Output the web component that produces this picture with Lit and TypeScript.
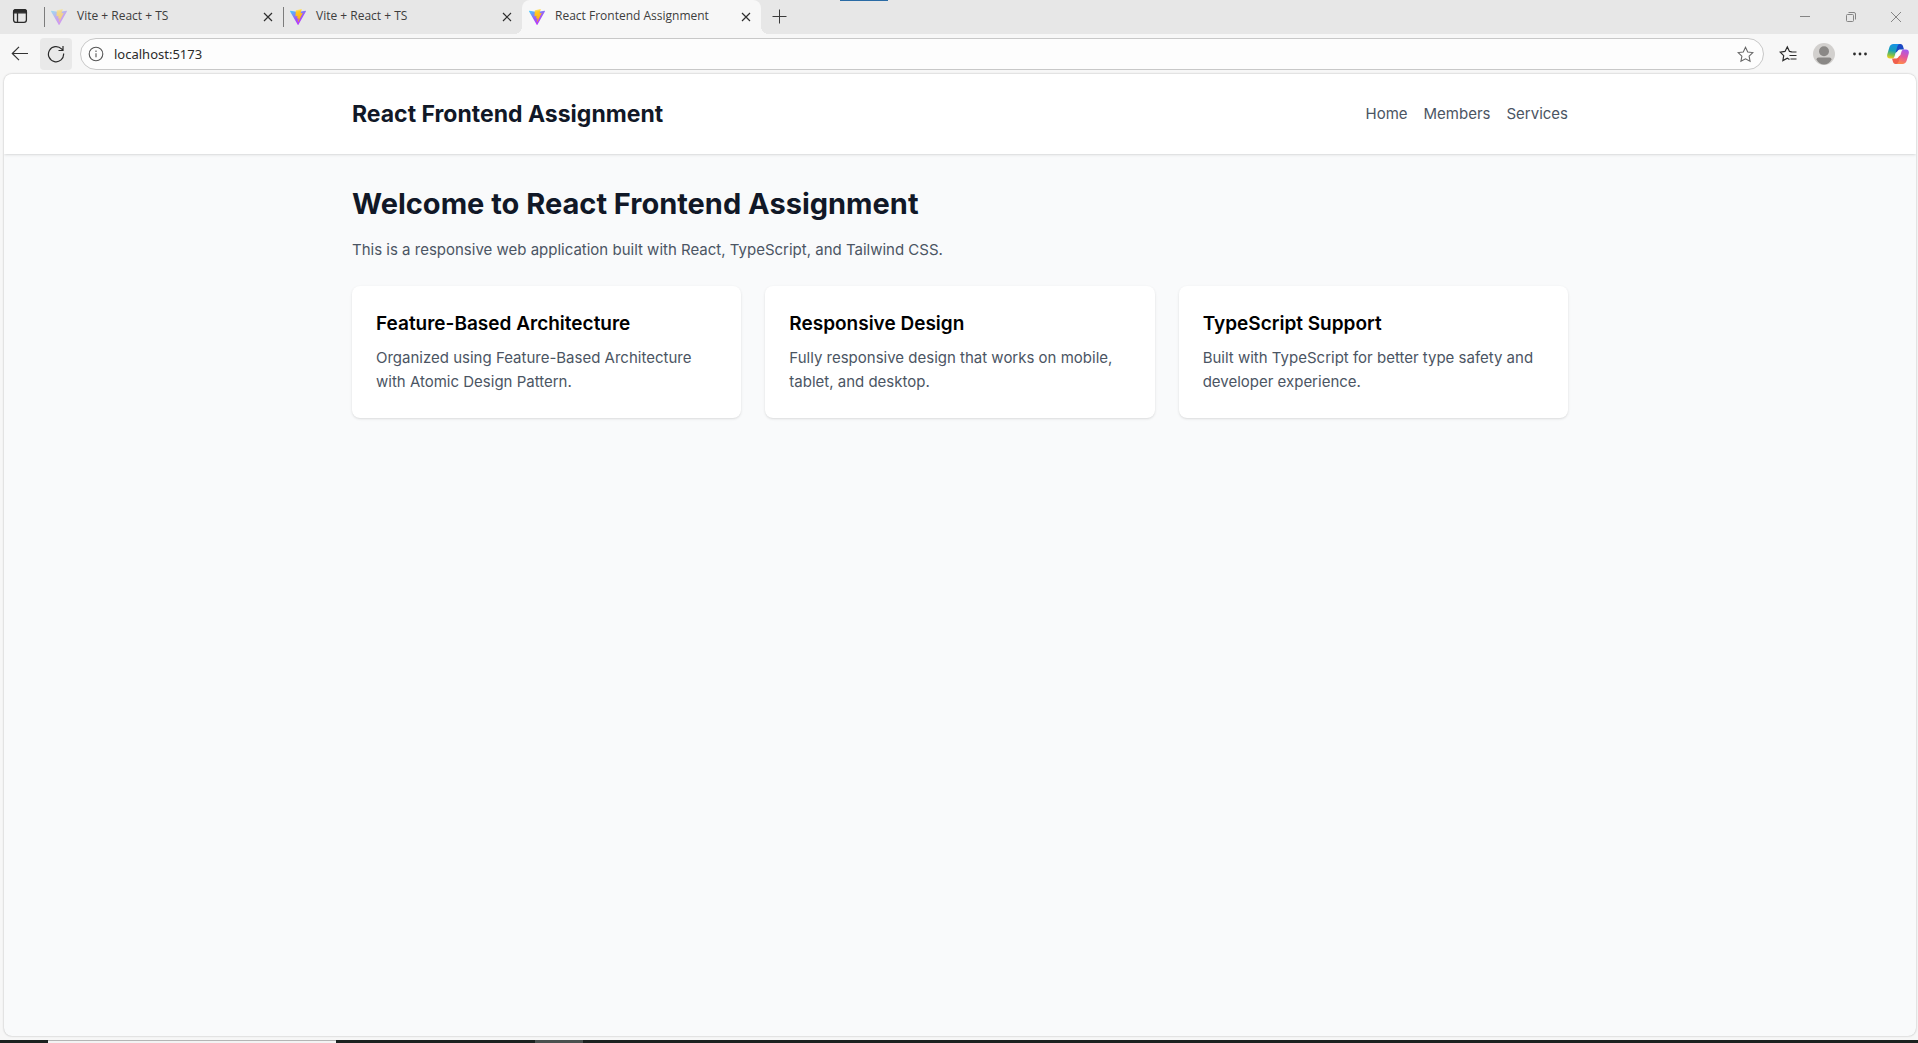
import { LitElement, html, css, svg } from "lit";
import { customElement, property } from "lit/decorators.js";

interface Tab {
  title: string;
  active: boolean;
  faded: boolean;
}

const TABS: Tab[] = [
  { title: "Vite + React + TS", active: false, faded: true },
  { title: "Vite + React + TS", active: false, faded: false },
  { title: "React Frontend Assignment", active: true, faded: false },
];

const FEATURES = [
  {
    title: "Feature-Based Architecture",
    text: "Organized using Feature-Based Architecture with Atomic Design Pattern.",
  },
  {
    title: "Responsive Design",
    text: "Fully responsive design that works on mobile, tablet, and desktop.",
  },
  {
    title: "TypeScript Support",
    text: "Built with TypeScript for better type safety and developer experience.",
  },
];

const star = svg`<path d="M8 1.2 L10.1 5.6 L14.9 6.2 L11.4 9.5 L12.3 14.4 L8 12.1 L3.7 14.4 L4.6 9.5 L1.1 6.2 L5.9 5.6 Z" />`;

const viteLogo = html`
  <svg width="16" height="16" viewBox="0 0 16 16" aria-hidden="true">
    <defs>
      <linearGradient id="v" x1="0" y1="0" x2="0.6" y2="1">
        <stop offset="0" stop-color="#41d1ff" />
        <stop offset="0.55" stop-color="#9b5cf5" />
        <stop offset="1" stop-color="#bd34fe" />
      </linearGradient>
      <linearGradient id="b" x1="0.4" y1="0" x2="0.5" y2="1">
        <stop offset="0" stop-color="#ffea83" />
        <stop offset="0.2" stop-color="#ffc928" />
        <stop offset="1" stop-color="#ffa800" />
      </linearGradient>
    </defs>
    <path d="M15.9 2.4 8.4 15.7a.4.4 0 0 1-.7 0L.1 2.4a.4.4 0 0 1 .4-.6L8 3.1l7.5-1.3a.4.4 0 0 1 .4.6Z" fill="url(#v)" />
    <path d="M11.5.1 6 1.2a.2.2 0 0 0-.2.2L5.500 7c0 .1.1.3.3.2l1.500-.3c.2 0 .3.1.2.2L7.100 9.300c0 .2.1.3.3.2l.9-.3c.2 0 .3.1.3.2l-.7 3.500c0 .2.2.3.3.1L12.600 4.300c.1-.1 0-.3-.2-.3l-1.600.3c-.2 0-.3-.1-.2-.2l1.100-3.700c0-.2-.1-.3-.2-.3Z" fill="url(#b)" />
  </svg>
`;

const closeIcon = html`
  <svg width="16" height="16" viewBox="0 0 16 16" fill="none" stroke="#2f2f2f" stroke-width="1.2" aria-hidden="true">
    <path d="M4 4l8 8M12 4l-8 8" />
  </svg>
`;

@customElement("browser-tab")
export class BrowserTab extends LitElement {
  @property() label = "";
  @property({ type: Boolean, reflect: true }) active = false;
  @property({ type: Boolean, reflect: true }) faded = false;

  static styles = css`
    :host {
      display: flex;
      flex: 0 1 239px;
      min-width: 0;
      padding-left: 1px;
      box-sizing: border-box;
    }
    .tab {
      position: relative;
      display: flex;
      flex: 1;
      min-width: 0;
      align-items: center;
      gap: 4px;
      padding: 0 7px 2px 6px;
      color: #3d3d3d;
      font-size: 12px;
    }
    .tab::before {
      content: "";
      position: absolute;
      left: -1px;
      top: 7px;
      bottom: 7px;
      width: 1px;
      background: #7c7c7c;
    }
    :host([active]) {
      padding-left: 0;
    }
    :host([active]) .tab {
      padding-left: 7px;
      background: #f7f7f7;
      border-radius: 8px 8px 0 0;
    }
    :host([active]) .tab::before {
      left: -8px;
      top: auto;
      bottom: 0;
      width: 8px;
      height: 8px;
      background: radial-gradient(circle at 0 0, transparent 8px, #f7f7f7 8px);
    }
    :host([active]) .tab::after {
      content: "";
      position: absolute;
      right: -8px;
      bottom: 0;
      width: 8px;
      height: 8px;
      background: radial-gradient(circle at 100% 0, transparent 8px, #f7f7f7 8px);
    }
    :host([faded]) .logo {
      opacity: 0.45;
    }
    .logo {
      display: flex;
      margin-top: 2px;
    }
    button {
      display: flex;
      padding: 0;
      border: 0;
      background: none;
      font: inherit;
      color: inherit;
    }
    .title {
      flex: 1;
      align-items: center;
      gap: 10px;
      min-width: 0;
      line-height: 16px;
      white-space: nowrap;
      overflow: hidden;
    }
    .close {
      margin-top: 2px;
    }
  `;

  render() {
    return html`
      <div class="tab">
        <button class="title">
          <span class="logo">${viteLogo}</span>
          <span>${this.label}</span>
        </button>
        <button class="close" aria-label="Close tab">${closeIcon}</button>
      </div>
    `;
  }
}

@customElement("browser-bar")
export class BrowserBar extends LitElement {
  static styles = css`
    :host {
      display: block;
      font-family: "Open Sans", "Noto Sans", sans-serif;
    }
    button {
      display: flex;
      align-items: center;
      justify-content: center;
      flex: none;
      padding: 0;
      border: 0;
      background: none;
    }
    .strip {
      position: relative;
      display: flex;
      height: 34px;
      background: #e7e7e7;
    }
    .menu {
      width: 44px;
      padding: 0 4px 2px 0;
    }
    .new {
      width: 36px;
      padding-bottom: 2px;
    }
    .spacer {
      flex: 1;
    }
    .win {
      width: 46px;
    }
    .win:last-of-type {
      width: 44px;
    }
    .marker {
      position: absolute;
      left: 840px;
      top: 0;
      width: 48px;
      height: 1px;
      background: #2a6ba5;
    }
    .toolbar {
      display: flex;
      align-items: center;
      height: 40px;
      background: #f7f7f7;
    }
    .back {
      width: 40px;
      height: 32px;
    }
    .reload {
      width: 32px;
      height: 32px;
      border-radius: 4px;
      background: #e9e9e9;
    }
    .address {
      display: flex;
      flex: 1;
      align-items: center;
      gap: 8px;
      box-sizing: border-box;
      height: 32px;
      margin-left: 8px;
      padding: 0 9px 0 7px;
      border: 1px solid #c8c8c8;
      border-radius: 16px;
      background: #fdfdfd;
    }
    .address input {
      flex: 1;
      min-width: 0;
      padding: 0 0 0 2px;
      border: 0;
      outline: 0;
      background: none;
      color: #2b2b2b;
      font: 13px/20px "Noto Sans", "Open Sans", sans-serif;
    }
    .actions {
      display: flex;
      align-items: center;
      padding: 0 2px 0 6px;
    }
    .actions button {
      width: 36px;
      height: 32px;
    }
    .actions .copilot {
      margin-left: 2px;
    }
  `;

  render() {
    return html`
      <div class="strip">
        <button class="menu" aria-label="Tab actions menu">
          <svg width="16" height="16" viewBox="0 0 16 16" fill="none" stroke="#2b2b2b" stroke-width="1.3">
            <rect x="1.6" y="1.6" width="12.8" height="12.8" rx="2.4" />
            <path d="M1.6 3.6a2 2 0 0 1 2-2h8.800a2 2 0 0 1 2 2v1.200H1.600Z" fill="#2b2b2b" />
            <path d="M5.500 5v9.400" />
          </svg>
        </button>
        ${TABS.map(
          (t) => html`<browser-tab .label=${t.title} ?active=${t.active} ?faded=${t.faded}></browser-tab>`,
        )}
        <button class="new" aria-label="New tab">
          <svg width="16" height="16" viewBox="0 0 16 16" stroke="#3a3a3a">
            <path d="M1.500 8.500h14M8.500 1.500v14" />
          </svg>
        </button>
        <span class="spacer"></span>
        <button class="win" aria-label="Minimize">
          <svg width="12" height="12" viewBox="0 0 12 12" stroke="#858585"><path d="M1 5.500h10" /></svg>
        </button>
        <button class="win" aria-label="Restore">
          <svg width="12" height="12" viewBox="0 0 12 12" fill="none" stroke="#858585">
            <rect x="1.500" y="3.500" width="7" height="7" rx="1" />
            <path d="M3.500 1.500h5.500a1.500 1.500 0 0 1 1.500 1.500v5.500" />
          </svg>
        </button>
        <button class="win" aria-label="Close">
          <svg width="12" height="12" viewBox="0 0 12 12" stroke="#858585"><path d="M1 1l10 10M11 1L1 11" /></svg>
        </button>
        <span class="marker"></span>
      </div>
      <div class="toolbar">
        <button class="back" aria-label="Back">
          <svg width="18" height="18" viewBox="0 0 18 18" fill="none" stroke="#333" stroke-width="1.2">
            <path d="M17 8.500H1.500M8 1.800 1.300 8.500 8 15.200" />
          </svg>
        </button>
        <button class="reload" aria-label="Refresh">
          <svg width="18" height="18" viewBox="0 0 18 18" fill="none" stroke="#2b2b2b" stroke-width="1.2">
            <path d="M16.600 8.500A7.600 7.600 0 1 1 14.500 3.900L15.800 5.200M16 1v4.500h-4.500" />
          </svg>
        </button>
        <div class="address">
          <svg width="16" height="16" viewBox="0 0 16 16" fill="none" stroke="#555" stroke-width="1.1">
            <circle cx="8" cy="8" r="6.800" />
            <path d="M8 7.200v4M8 4.600v1.300" />
          </svg>
          <input type="text" aria-label="Address" value="localhost:5173" />
          <button aria-label="Add to favorites">
            <svg width="17" height="17" viewBox="0 0 16 16" fill="none" stroke="#666">${star}</svg>
          </button>
        </div>
        <div class="actions">
          <button aria-label="Favorites">
            <svg width="18" height="18" viewBox="0 0 18 18" fill="none" stroke="#2b2b2b" stroke-width="1.2">
              <path d="M10.500 14.500 8.300 13.300 3.900 15.600 4.700 10.600 1.200 7.100 6 6.400 8.300 1.900 10.500 6.400 12.500 6.700M11.500 7h6M10.500 10.500h7M11.500 14h6" />
            </svg>
          </button>
          <button aria-label="Profile">
            <svg width="22" height="22" viewBox="0 0 22 22">
              <circle cx="11" cy="11" r="11" fill="#d2d0ce" />
              <circle cx="11" cy="8.200" r="5" fill="#8a8886" />
              <path d="M3.500 16.500a2 2 0 0 1 2-2h11a2 2 0 0 1 2 2C16.800 19.700 14.200 21.500 11 21.500S5.200 19.700 3.500 16.500Z" fill="#8a8886" />
            </svg>
          </button>
          <button aria-label="Settings and more">
            <svg width="16" height="16" viewBox="0 0 16 16" fill="#2b2b2b">
              <circle cx="2.500" cy="8" r="1.400" /><circle cx="8" cy="8" r="1.400" /><circle cx="13.500" cy="8" r="1.400" />
            </svg>
          </button>
          <button class="copilot" aria-label="Copilot">
            <svg width="22" height="20" viewBox="0 0 22 20">
              <defs>
                <linearGradient id="cl" x1="0.500" y1="0" x2="0.300" y2="1">
                  <stop offset="0" stop-color="#1691e6" />
                  <stop offset="0.450" stop-color="#17a0b8" />
                  <stop offset="0.750" stop-color="#7cc04a" />
                  <stop offset="1" stop-color="#f2cf1b" />
                </linearGradient>
                <linearGradient id="cr" x1="0.700" y1="0" x2="0.400" y2="1">
                  <stop offset="0" stop-color="#a457f2" />
                  <stop offset="0.500" stop-color="#e4559c" />
                  <stop offset="1" stop-color="#ff8a4a" />
                </linearGradient>
              </defs>
              <path d="M9 0H13.500C15 0 15.700 1 16.100 2.400L17 5.500H13.500C12 5.500 11 6 10.500 7.500L8 9Z" fill="#1b49c4" />
              <path d="M13 20H8.500C7 20 6.300 19 5.900 17.600L5 14.500H8.500C10 14.500 11 14 11.500 12.500L14 11Z" fill="#f0604d" />
              <path d="M6.500 0H13C11.300 0 10.600 1.500 10.200 3L7.800 11.500C7.300 13.500 6.500 14.500 4.800 14.500H3C.5 14.500-.3 12.600.3 10.300L2.300 3.500C3 1.200 4.300 0 6.500 0Z" fill="url(#cl)" />
              <path d="M15.500 20H9C10.700 20 11.400 18.500 11.800 17L14.200 8.500C14.700 6.500 15.500 5.500 17.200 5.500H19C21.500 5.500 22.300 7.400 21.700 9.700L19.700 16.500C19 18.800 17.700 20 15.500 20Z" fill="url(#cr)" />
              <path d="M12.200 6.500H14L11.300 13C11 13.500 10.500 13.700 9.800 13.700H8L10.500 7.500C10.800 6.800 11.400 6.500 12.200 6.500Z" fill="#fff" />
            </svg>
          </button>
        </div>
      </div>
    `;
  }
}

@customElement("site-page")
export class SitePage extends LitElement {
  static styles = css`
    :host {
      display: block;
      color: #000;
      font: 15px/24px Inter, sans-serif;
    }
    h1,
    h2,
    h3,
    p {
      margin: 0;
    }
    .container {
      max-width: 1280px;
      margin: 0 auto;
      padding: 0 32px;
      box-sizing: border-box;
    }
    header {
      background: #fff;
      box-shadow: 0 1px 3px rgba(0, 0, 0, 0.1), 0 1px 2px -1px rgba(0, 0, 0, 0.1);
    }
    .bar {
      display: flex;
      align-items: center;
      justify-content: space-between;
      padding-top: 24px;
      padding-bottom: 24px;
    }
    h1 {
      color: #111827;
      font-size: 23px;
      line-height: 32px;
      font-weight: 700;
    }
    nav {
      display: flex;
      gap: 16px;
    }
    nav a {
      color: #4b5563;
      text-decoration: none;
    }
    main.container {
      padding-top: 32px;
      padding-bottom: 32px;
    }
    h2 {
      margin-bottom: 16px;
      color: #111827;
      font-size: 29px;
      line-height: 36px;
      font-weight: 700;
    }
    p {
      color: #4b5563;
    }
    .cards {
      display: grid;
      grid-template-columns: repeat(3, minmax(0, 1fr));
      gap: 24px;
      margin-top: 24px;
    }
    .card {
      padding: 24px;
      border-radius: 8px;
      background: #fff;
      box-shadow: 0 1px 3px rgba(0, 0, 0, 0.1), 0 1px 2px -1px rgba(0, 0, 0, 0.1);
    }
    h3 {
      margin-bottom: 8px;
      font-size: 19px;
      line-height: 28px;
      font-weight: 600;
    }
  `;

  render() {
    return html`
      <header>
        <div class="container bar">
          <h1>React Frontend Assignment</h1>
          <nav>
            <a href="#home">Home</a>
            <a href="#members">Members</a>
            <a href="#services">Services</a>
          </nav>
        </div>
      </header>
      <main class="container">
        <h2>Welcome to React Frontend Assignment</h2>
        <p>This is a responsive web application built with React, TypeScript, and Tailwind CSS.</p>
        <div class="cards">
          ${FEATURES.map(
            (f) => html`<section class="card"><h3>${f.title}</h3><p>${f.text}</p></section>`,
          )}
        </div>
      </main>
    `;
  }
}

@customElement("app-root")
export class AppRoot extends LitElement {
  static styles = css`
    :host {
      display: flex;
      flex-direction: column;
      min-height: 100vh;
      background: #f7f7f7;
    }
    .frame {
      display: flex;
      flex: 1;
      flex-direction: column;
    }
    .page {
      flex: 1;
      margin: 0 2px 4px 4px;
      border-radius: 8px;
      overflow: hidden;
      background: #f9fafb;
      box-shadow: 0 0 2px rgba(0, 0, 0, 0.3);
    }
    .taskbar {
      display: flex;
      height: 3px;
      background: #1b211f;
    }
    .window {
      width: 288px;
      margin-left: 48px;
      box-sizing: border-box;
      border-top: 1px solid #b5b5b5;
      background: #f3f3f3;
    }
    .item {
      width: 48px;
      margin-left: 199px;
      background: #4a514f;
    }
  `;

  render() {
    return html`
      <browser-bar></browser-bar>
      <div class="frame"><site-page class="page"></site-page></div>
      <div class="taskbar"><span class="window"></span><span class="item"></span></div>
    `;
  }
}
